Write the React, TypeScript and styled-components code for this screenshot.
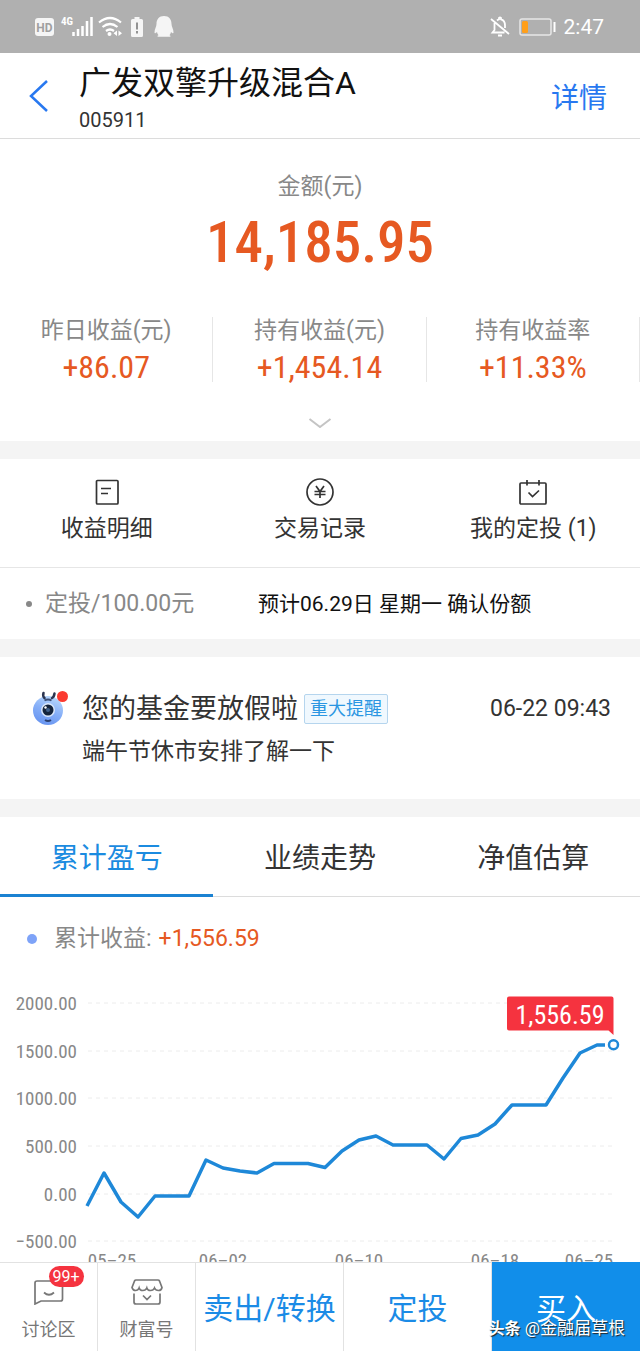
import React from 'react';
import styled, { createGlobalStyle } from 'styled-components';

const GlobalStyle = createGlobalStyle`
  * { box-sizing: border-box; }
  body {
    margin: 0;
    background: #fff;
    color: #333;
    font-family: Roboto, "Noto Sans CJK SC", sans-serif;
    font-size: 23px;
    line-height: 28px;
  }
  button {
    font: inherit;
    color: inherit;
    background: none;
    border: 0;
    padding: 0;
    cursor: pointer;
  }
  a { color: inherit; text-decoration: none; }
  h1, h2, p, ul, dl, dd { margin: 0; padding: 0; font-weight: 400; }
  svg { display: block; }
`;

const numeric = '"Roboto Condensed", Roboto, sans-serif';

const Screen = styled.div`
  display: flex;
  flex-direction: column;
  height: 100vh;
`;

const StatusBar = styled.div`
  flex: none;
  display: flex;
  align-items: center;
  justify-content: space-between;
  height: 53px;
  padding: 0 36px 0 35px;
  background: #b0b0b0;
  color: #fff;
`;

const StatusGroup = styled.div<{ $gap: number }>`
  display: flex;
  align-items: center;
  gap: ${(p) => p.$gap}px;
`;

const Clock = styled.span`
  font-size: 21px;
`;

const Header = styled.header`
  flex: none;
  display: flex;
  align-items: center;
  height: 86px;
  padding: 0 33px 0 29px;
  border-bottom: 1px solid #dcdcdc;
`;

const BackButton = styled.button`
  width: 50px;
`;

const Titles = styled.div`
  flex: 1;
  padding-top: 6px;
`;

const FundName = styled.h1`
  color: #111;
  font-size: 32px;
  line-height: 42px;
`;

const FundCode = styled.p`
  font-size: 20px;
  line-height: 32px;
`;

const DetailLink = styled.a`
  padding-top: 6px;
  color: #2878f0;
  font-size: 28px;
`;

const Content = styled.main`
  flex: 1;
  min-height: 0;
  overflow-y: auto;
  scrollbar-width: none;
`;

const Section = styled.section`
  & + & {
    border-top: 18px solid #f4f4f4;
  }
`;

const Summary = styled.div`
  display: flex;
  flex-direction: column;
  align-items: center;
  padding: 34px 0 13px;
`;

const Label = styled.span`
  color: #888;
`;

const Amount = styled.p`
  margin-top: 8px;
  color: #e65922;
  font-family: ${numeric};
  font-size: 57px;
  font-weight: 500;
  line-height: 68px;
`;

const Stats = styled.dl`
  display: grid;
  grid-template-columns: repeat(3, 1fr);
  width: 100%;
  margin: 40px 0 36px;
`;

const Stat = styled.div`
  display: flex;
  flex-direction: column;
  gap: 8px;
  padding-bottom: 1px;
  border-right: 1px solid #e6e6e6;
  text-align: center;
`;

const StatLabel = styled.dt`
  color: #888;
`;

const StatValue = styled.dd`
  color: #e65922;
  font-family: ${numeric};
  font-size: 32px;
`;

const Shortcuts = styled.nav`
  display: grid;
  grid-template-columns: repeat(3, 1fr);
  padding: 19px 0 24px;
`;

const Shortcut = styled.a`
  display: flex;
  flex-direction: column;
  align-items: center;
  gap: 9px;
`;

const Plan = styled.div`
  display: flex;
  align-items: center;
  padding: 22px 26px 21px;
  border-top: 1px solid #e6e6e6;
`;

const PlanName = styled.span`
  flex: 0 0 232px;
  display: flex;
  align-items: center;
  gap: 13px;
  color: #888;

  &::before {
    content: '';
    width: 6px;
    height: 6px;
    border-radius: 50%;
    background: #888;
  }
`;

const PlanDate = styled.span`
  color: #111;
  font-size: 21px;
`;

const Notice = styled.article`
  display: flex;
  align-items: flex-start;
  padding: 34px 29px 31px 32px;
`;

const NoticeBody = styled.div`
  flex: 1;
  margin-left: 14px;
`;

const NoticeHead = styled.div`
  display: flex;
  align-items: center;
`;

const NoticeTitle = styled.h2`
  font-size: 27px;
  line-height: 36px;
`;

const Tag = styled.span`
  margin-left: 6px;
  padding: 0 5px;
  border: 1px solid #b5d5ee;
  border-radius: 2px;
  background: #f0f8fe;
  color: #2b96e2;
  font-size: 18px;
`;

const NoticeTime = styled.time`
  margin-left: auto;
`;

const NoticeText = styled.p`
  margin-top: 9px;
  line-height: 32px;
`;

const Tabs = styled.div`
  display: grid;
  grid-template-columns: repeat(3, 1fr);
  height: 80px;
`;

const Tab = styled.button<{ $active?: boolean }>`
  padding-top: 4px;
  border-bottom: 1px solid #dcdcdc;
  font-size: 28px;
  ${(p) => p.$active && 'padding-top: 6px; color: #1b8be0; border-bottom: 3px solid #1b82d2;'}
`;

const Legend = styled.p`
  display: flex;
  align-items: center;
  padding: 26px 27px 15px;
  line-height: 32px;
  color: #888;

  &::before {
    content: '';
    width: 10px;
    height: 10px;
    margin-right: 17px;
    border-radius: 50%;
    background: #7ea3f8;
  }
`;

const Gain = styled.span`
  margin-left: 7px;
  color: #e65922;
`;

const Chart = styled.svg`
  width: 100%;
  height: auto;
  font-family: ${numeric};
  font-size: 19px;
`;

const BottomBar = styled.footer`
  flex: none;
  position: relative;
  display: grid;
  grid-template-columns: 98fr 98fr 148fr 148fr 148fr;
  height: 89px;
  border-top: 1px solid #e2e2e2;
  background: #fff;
`;

const BarLink = styled.a`
  display: flex;
  flex-direction: column;
  align-items: center;
  padding-top: 14px;
  border-right: 1px solid #e2e2e2;
  color: #777;
  font-size: 18px;
`;

const IconSlot = styled.span`
  position: relative;
  margin-bottom: 11px;
`;

const Badge = styled.span`
  position: absolute;
  left: 16px;
  top: -11px;
  padding: 0 4px;
  border-radius: 11px;
  background: #f5333f;
  color: #fff;
  font-size: 16px;
  line-height: 21px;
`;

const BarButton = styled.button<{ $primary?: boolean }>`
  padding-top: 4px;
  border-right: 1px solid #e2e2e2;
  color: #1b8be6;
  font-size: 30px;
  white-space: nowrap;
  ${(p) => p.$primary && 'background: #118eea; color: #fff; border: 0; margin-top: -1px;'}
`;

const Watermark = styled.span`
  position: absolute;
  right: 15px;
  bottom: 8px;
  color: #fff;
  font-size: 17px;
  text-shadow: 1px 1px 1px #222;
  pointer-events: none;
  white-space: nowrap;

  b { font-size: 16px; }
`;

const StatusIcons = () => (
  <svg width="140" height="26" viewBox="35 14 140 26" fill="none" aria-hidden="true">
    <rect x="35" y="18" width="19" height="18" rx="3" fill="#f5f5f5" />
    <text x="44.500" y="31.500" textAnchor="middle" fontSize="12" fontWeight="700" fill="#a0a0a0">HD</text>
    <text x="61" y="25" fontSize="11" fontWeight="700" fontFamily="Roboto Condensed" fill="#fff">4G</text>
    <path d="M73.500 36v-4M78 36v-7M82.500 36V26M87 36V21M91.500 36V17" stroke="#fff" strokeWidth="2.500" />
    <path d="M99 22.500q11-9 22 0M102.500 27q7.500-6 15 0M106 31q4-3 8 0" stroke="#fff" strokeWidth="2.200" />
    <circle cx="109.500" cy="34" r="2" fill="#fff" />
    <path d="M117 30.500v5.500l-3.500-2.700zM118.500 30.500v5.500l3.500-2.700z" fill="#fff" />
    <path d="M134.500 17h5v2h2q1.500 0 1.500 1.500v15q0 1.500-1.500 1.500h-9q-1.500 0-1.500-1.500v-15q0-1.500 1.500-1.500h2z" fill="#f5f5f5" />
    <path d="M137 22.500v7M137 31v2.500" stroke="#888" strokeWidth="1.800" />
    <path d="M164 16c-5 0-7.500 3.500-7.500 8 0 3-2 5-2 8.500 0 1.500 1.500.5 2.500-.5.300 1.500 1 2.500 1.500 3.200-1 .3-1.500 1.500-.5 1.500h12c1 0 .5-1.200-.5-1.500.5-.7 1.200-1.700 1.500-3.200 1 1 2.500 2 2.500.5 0-3.500-2-5.500-2-8.500 0-4.500-2.500-8-7.500-8z" fill="#f5f5f5" />
  </svg>
);

const MutedBell = () => (
  <svg width="20" height="22" viewBox="0 0 20 22" fill="none" stroke="#fff" strokeWidth="1.800" aria-hidden="true">
    <path d="M1 3l18 15M4.500 7v7L2.500 16.500h12M7 4.500q1-1 2-1.200V2q1-1 2 0v1.300q4 1 4 6V12M8 19.500h4" />
  </svg>
);

const Battery = () => (
  <svg width="38" height="18" viewBox="0 0 38 18" aria-hidden="true">
    <rect x="1" y="1" width="31" height="16" rx="2" fill="none" stroke="#e6e6e6" strokeWidth="1.500" />
    <rect x="3" y="3" width="6" height="12" rx="1.500" fill="#ff9f1a" />
    <path d="M35.500 4v10" stroke="#fff" strokeWidth="2" />
  </svg>
);

const LineIcon = ({ children }: { children: React.ReactNode }) => (
  <svg width="28" height="28" viewBox="0 0 28 28" fill="none" stroke="#333" strokeWidth="1.700" aria-hidden="true">
    {children}
  </svg>
);

const Mascot = () => (
  <svg width="36" height="40" viewBox="0 0 36 40" aria-hidden="true">
    <defs>
      <linearGradient id="mascotBody" x1="0.700" y1="0" x2="0.300" y2="1">
        <stop offset="0" stopColor="#b9d8fb" />
        <stop offset="0.500" stopColor="#86aff8" />
        <stop offset="1" stopColor="#6693f0" />
      </linearGradient>
    </defs>
    <ellipse cx="16" cy="19.500" rx="15" ry="14.500" fill="url(#mascotBody)" />
    <path d="M12.500 7Q10.500 5 11.500 2M20 7q2-1 2.500-4.500" fill="none" stroke="#2b3550" strokeWidth="2.500" strokeLinecap="round" />
    <path d="M12.500 9.500q3.500-2 7 0" fill="none" stroke="#3c5078" strokeWidth="2" />
    <circle cx="16" cy="19" r="7" fill="#dbe8fb" />
    <circle cx="16" cy="19" r="5.500" fill="#14243c" />
    <circle cx="16" cy="19" r="2" fill="#3f5f88" />
    <circle cx="13.500" cy="16.500" r="1.200" fill="#fff" />
    <path d="M13 29q3 2 6 0" fill="none" stroke="#2b4070" strokeWidth="2" />
    <circle cx="30.500" cy="5.500" r="5.500" fill="#fb3a30" />
  </svg>
);

const stats = [
  { label: '昨日收益(元)', value: '+86.07' },
  { label: '持有收益(元)', value: '+1,454.14' },
  { label: '持有收益率', value: '+11.33%' },
];

const yAxis = [
  { label: '2000.00', y: 33 },
  { label: '1500.00', y: 81 },
  { label: '1000.00', y: 128 },
  { label: '500.00', y: 176 },
  { label: '0.00', y: 224 },
  { label: '−500.00', y: 271 },
];

const xAxis = [
  { label: '05–25', x: 112 },
  { label: '06–02', x: 223 },
  { label: '06–10', x: 359 },
  { label: '06–18', x: 495 },
  { label: '06–25', x: 589 },
];

const series =
  '87,236 104,203 121,232 138,247 155,226 189,226 206,190 223,198 240,201 257,203 274,193.500 308,193.500 325,197.500 342,181 359,170 376,166 393,175 427,175 444,189 461,168.500 478,165 495,154 512,135 546,135 563,108 580,83 597,75 605,75';

export default function App() {
  return (
    <>
      <GlobalStyle />
      <Screen>
        <StatusBar>
          <StatusIcons />
          <StatusGroup $gap={7}>
            <StatusGroup $gap={9}>
              <MutedBell />
              <Battery />
            </StatusGroup>
            <Clock>2:47</Clock>
          </StatusGroup>
        </StatusBar>

        <Header>
          <BackButton aria-label="返回">
            <svg width="20" height="34" viewBox="0 0 20 34" fill="none" stroke="#2878f0" strokeWidth="2.500">
              <path d="M18 2L2 17l16 15" />
            </svg>
          </BackButton>
          <Titles>
            <FundName>广发双擎升级混合A</FundName>
            <FundCode>005911</FundCode>
          </Titles>
          <DetailLink href="#detail">详情</DetailLink>
        </Header>

        <Content>
          <Section>
            <Summary>
              <Label>金额(元)</Label>
              <Amount>14,185.95</Amount>
              <Stats>
                {stats.map((s) => (
                  <Stat key={s.label}>
                    <StatLabel>{s.label}</StatLabel>
                    <StatValue>{s.value}</StatValue>
                  </Stat>
                ))}
              </Stats>
              <button aria-label="展开">
                <svg width="24" height="10" viewBox="0 0 24 10" fill="none" stroke="#c4c4c4" strokeWidth="2">
                  <path d="M1.500 1L12 9l10.500-8" />
                </svg>
              </button>
            </Summary>
          </Section>

          <Section>
            <Shortcuts>
              <Shortcut href="#income">
                <LineIcon>
                  <rect x="3.500" y="2.500" width="21.500" height="23.500" rx="1" />
                  <path d="M8 10.500h10M8 15.500h7" />
                </LineIcon>
                收益明细
              </Shortcut>
              <Shortcut href="#records">
                <LineIcon>
                  <circle cx="14" cy="14" r="13" />
                  <path d="M10 8l4 5.500L18 8M14 13.500V20M8.500 13.500h11M8.500 16.500h11" />
                </LineIcon>
                交易记录
              </Shortcut>
              <Shortcut href="#plans">
                <LineIcon>
                  <rect x="1" y="5" width="26" height="21" rx="1" />
                  <path d="M8 2v5.500M20 2v5.500M9.500 14.500l4 4 6.500-6" />
                </LineIcon>
                <span>我的定投 (1)</span>
              </Shortcut>
            </Shortcuts>
            <Plan>
              <PlanName>定投/100.00元</PlanName>
              <PlanDate>预计06.29日 星期一 确认份额</PlanDate>
            </Plan>
          </Section>

          <Section>
            <Notice>
              <Mascot />
              <NoticeBody>
                <NoticeHead>
                  <NoticeTitle>您的基金要放假啦</NoticeTitle>
                  <Tag>重大提醒</Tag>
                  <NoticeTime>06-22 09:43</NoticeTime>
                </NoticeHead>
                <NoticeText>端午节休市安排了解一下</NoticeText>
              </NoticeBody>
            </Notice>
          </Section>

          <Section>
            <Tabs role="tablist">
              <Tab role="tab" aria-selected="true" $active>累计盈亏</Tab>
              <Tab role="tab" aria-selected="false">业绩走势</Tab>
              <Tab role="tab" aria-selected="false">净值估算</Tab>
            </Tabs>
            <Legend>
              累计收益:<Gain>+1,556.59</Gain>
            </Legend>
            <Chart viewBox="0 0 640 310" role="img" aria-label="累计收益走势">
              {yAxis.map((t) => (
                <g key={t.label}>
                  <path d={`M88 ${t.y}H612`} stroke="#ececec" strokeDasharray="4 4" />
                  <text x="77" y={t.y + 7} textAnchor="end" fill="#888">{t.label}</text>
                </g>
              ))}
              {xAxis.map((t) => (
                <text key={t.label} x={t.x} y="297" textAnchor="middle" fill="#888">{t.label}</text>
              ))}
              <polyline points={series} fill="none" stroke="#1e88d8" strokeWidth="3.500" strokeLinejoin="round" />
              <circle cx="613.500" cy="74.700" r="4.500" fill="#fff" stroke="#1e88d8" strokeWidth="2.500" />
              <path d="M509 26.500h102.500q2 0 2 2V65l-5-4.500H509q-2 0-2-2v-30q0-2 2-2z" fill="#f5333f" />
              <text x="560" y="54" textAnchor="middle" fontSize="26" fill="#fff">1,556.59</text>
            </Chart>
          </Section>
        </Content>

        <BottomBar>
          <BarLink href="#forum">
            <IconSlot>
              <svg width="32" height="28" viewBox="0 0 32 28" fill="none" stroke="#777" strokeWidth="1.700" aria-hidden="true">
                <path d="M3.500 4h24q2 0 2 2v16q0 2-2 2H8l-6 3V6q0-2 2-2z" />
                <path d="M11 15.500q5 4.500 10 0" />
              </svg>
              <Badge>99+</Badge>
            </IconSlot>
            讨论区
          </BarLink>
          <BarLink href="#wealth">
            <IconSlot>
              <svg width="32" height="28" viewBox="0 0 32 28" fill="none" stroke="#777" strokeWidth="1.700" aria-hidden="true">
                <path d="M5 3h22q1 0 1.500 1l2.500 6.500q-.500 3-3.500 3t-4-2.500q-1 2.500-4 2.500T15.800 11q-1 2.500-4 2.500t-3.700-2.500q-1 2.500-3.600 2.500T1 10.500L3.500 4Q4 3 5 3z" />
                <path d="M3 16.500V25q0 2 2 2h22q2 0 2-2v-8.500M12 18.500l4 4 4-4" />
              </svg>
            </IconSlot>
            财富号
          </BarLink>
          <BarButton>卖出/转换</BarButton>
          <BarButton>定投</BarButton>
          <BarButton $primary>买入</BarButton>
          <Watermark>
            <b>头条</b> @金融届草根
          </Watermark>
        </BottomBar>
      </Screen>
    </>
  );
}
